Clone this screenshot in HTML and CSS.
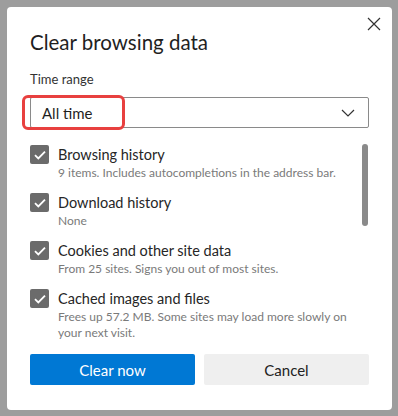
FILE: index.html
```html
<!DOCTYPE html>
<html lang="en">
<head>
    <meta charset="UTF-8">
    <meta name="viewport" content="width=device-width, initial-scale=1.0">
    <title>Clear browsing data</title>
    <link rel="stylesheet" href="styles.css">
</head>
<body>
    <div class="dialog">
        <div class="dialog-head">
            <h1>Clear browsing data</h1>
            <button class="close" aria-label="Close">
                <svg width="14" height="14" viewBox="0 0 14 14"><path d="M1 1L13 13M13 1L1 13" stroke="#333" stroke-width="1.2" fill="none"/></svg>
            </button>
        </div>

        <div class="field-label">Time range</div>
        <div class="select">
            <span class="select-value">All time</span>
            <svg width="14" height="8" viewBox="0 0 14 8"><path d="M1 1L7 7L13 1" stroke="#333" stroke-width="1.2" fill="none"/></svg>
            <span class="highlight"></span>
        </div>

        <div class="options">
            <div class="option-list">
                <div class="option">
                    <span class="check"><svg width="12" height="10" viewBox="0 0 12 10"><path d="M1 5.2L4.3 8.4L11 1.6" stroke="#fff" stroke-width="1.8" fill="none"/></svg></span>
                    <div>
                        <div class="option-title">Browsing history</div>
                        <div class="option-desc">9 items. Includes autocompletions in the address bar.</div>
                    </div>
                </div>
                <div class="option">
                    <span class="check"><svg width="12" height="10" viewBox="0 0 12 10"><path d="M1 5.2L4.3 8.4L11 1.6" stroke="#fff" stroke-width="1.8" fill="none"/></svg></span>
                    <div>
                        <div class="option-title">Download history</div>
                        <div class="option-desc">None</div>
                    </div>
                </div>
                <div class="option">
                    <span class="check"><svg width="12" height="10" viewBox="0 0 12 10"><path d="M1 5.2L4.3 8.4L11 1.6" stroke="#fff" stroke-width="1.8" fill="none"/></svg></span>
                    <div>
                        <div class="option-title">Cookies and other site data</div>
                        <div class="option-desc">From 25 sites. Signs you out of most sites.</div>
                    </div>
                </div>
                <div class="option">
                    <span class="check"><svg width="12" height="10" viewBox="0 0 12 10"><path d="M1 5.2L4.3 8.4L11 1.6" stroke="#fff" stroke-width="1.8" fill="none"/></svg></span>
                    <div>
                        <div class="option-title">Cached images and files</div>
                        <div class="option-desc">Frees up 57.2 MB. Some sites may load more slowly on your next visit.</div>
                    </div>
                </div>
            </div>
            <div class="scrollbar"></div>
        </div>

        <div class="actions">
            <button class="btn primary">Clear now</button>
            <button class="btn">Cancel</button>
        </div>
    </div>
</body>
</html>
```

FILE: styles.css
```css
body {
    margin: 0;
    width: 398px;
    height: 416px;
    background: #9d9d9d;
    font-family: Lato, "Noto Sans", sans-serif;
    color: #1f1f1f;
    padding: 7px 6px 0 7px;
    box-sizing: border-box;
}
.dialog {
    background: white;
    height: 403px;
    border-radius: 4px;
    padding: 0 23px 0 23px;
    box-sizing: border-box;
}
.dialog-head {
    display: flex;
    justify-content: space-between;
    align-items: flex-start;
    padding-top: 21px;
}
h1 {
    margin: 0;
    font-size: 20.5px;
    font-weight: 400;
    line-height: 28px;
}
.close {
    background: none;
    border: none;
    padding: 0;
    margin: -11px -12px 0 0;
    cursor: pointer;
}
.field-label {
    margin-top: 14px;
    font-size: 13px;
    line-height: 18px;
    color: #333;
}
.select {
    position: relative;
    margin-top: 9px;
    height: 31px;
    border: 1px solid #8a8a8a;
    border-radius: 2px;
    display: flex;
    align-items: center;
    justify-content: space-between;
    padding: 0 13px 0 11px;
    box-sizing: border-box;
}
.select-value {
    font-size: 15px;
}
.highlight {
    position: absolute;
    left: -9px;
    top: -3px;
    width: 97px;
    height: 29px;
    border: 3px solid #e8403f;
    border-radius: 6px;
}
.options {
    display: flex;
    justify-content: space-between;
    margin-top: 16px;
}
.option {
    display: flex;
    gap: 9px;
    margin-bottom: 11px;
}
.check {
    flex: none;
    width: 19px;
    height: 19px;
    margin-top: 1px;
    background: #6b6b6b;
    border-radius: 2px;
    display: flex;
    align-items: center;
    justify-content: center;
}
.option-title {
    font-size: 14.5px;
    line-height: 21px;
    color: #262626;
}
.option-desc {
    font-size: 12px;
    line-height: 16px;
    color: #7a7a7a;
    max-width: 290px;
}
.scrollbar {
    flex: none;
    width: 6px;
    height: 82px;
    margin: 0 1px 0 0;
    background: #8a8a8a;
    border-radius: 3px;
}
.actions {
    display: grid;
    grid-template-columns: 1fr 1fr;
    gap: 9px;
    margin-top: 2px;
}
.btn {
    height: 31px;
    border: none;
    border-radius: 2px;
    background: #efefef;
    color: #222;
    font-family: inherit;
    font-size: 15px;
}
.primary {
    background: #0078d4;
    color: white;
}
```
